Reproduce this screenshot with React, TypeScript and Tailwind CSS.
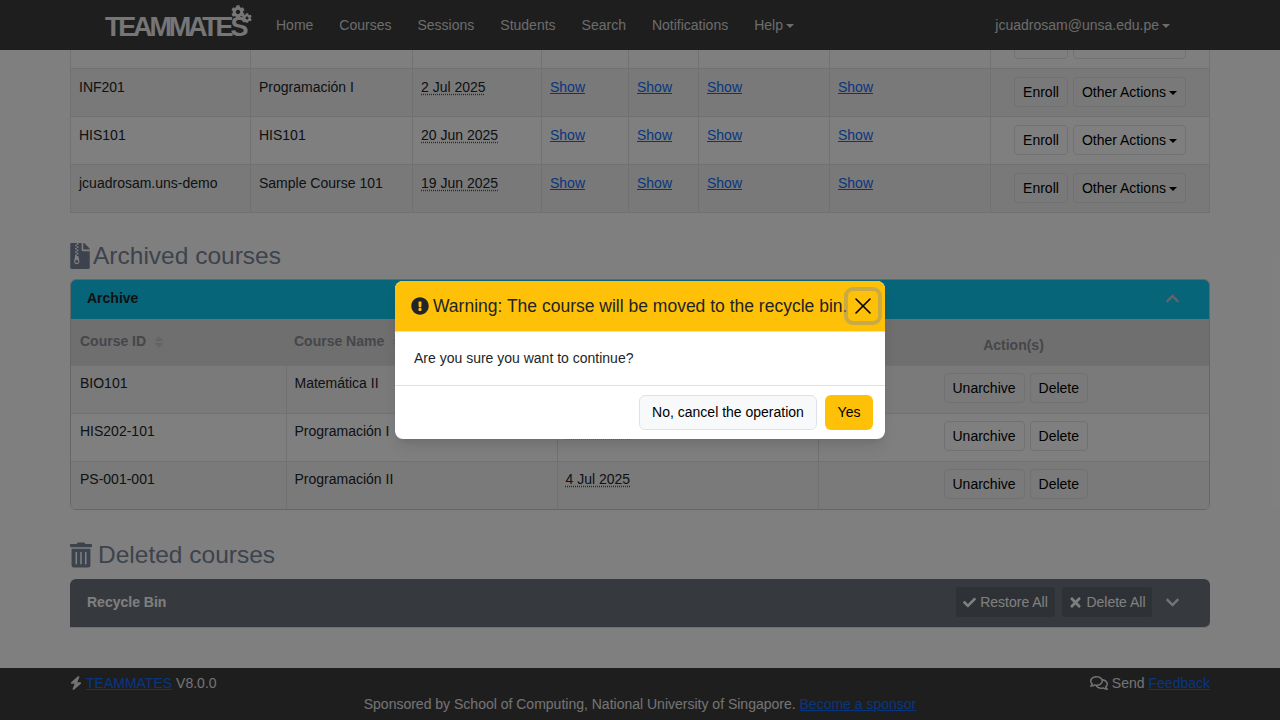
import { ReactNode } from "react";
import {
  FaCheck,
  FaChevronDown,
  FaChevronUp,
  FaCog,
  FaExclamationCircle,
  FaFileArchive,
  FaRegComments,
  FaSort,
  FaTimes,
  FaTrashAlt,
} from "react-icons/fa";
import { FaBolt } from "react-icons/fa6";
import { X } from "lucide-react";

const activeCourses = [
  { id: "", name: "", date: "", striped: false, hidden: true },
  { id: "INF201", name: "Programación I", date: "2 Jul 2025", striped: true },
  { id: "HIS101", name: "HIS101", date: "20 Jun 2025", striped: false },
  {
    id: "jcuadrosam.uns-demo",
    name: "Sample Course 101",
    date: "19 Jun 2025",
    striped: true,
  },
];

const archivedCourses = [
  { id: "BIO101", name: "Matemática II", date: "4 Jul 2025", striped: true },
  { id: "HIS202-101", name: "Programación I", date: "4 Jul 2025", striped: false },
  { id: "PS-001-001", name: "Programación II", date: "4 Jul 2025", striped: true },
];

const navLinks = ["Home", "Courses", "Sessions", "Students", "Search", "Notifications"];

const Caret = () => (
  <span className="ml-[3px] inline-block h-0 w-0 border-x-[4px] border-t-[4px] border-x-transparent border-t-current align-[2px]"></span>
);

const Btn = ({ children }: { children: ReactNode }) => (
  <button className="h-[30px] rounded-[4px] border border-[#dee2e6] px-2 text-sm whitespace-nowrap text-[#000]">
    {children}
  </button>
);

const DateText = ({ children }: { children: ReactNode }) => (
  <span className="underline decoration-[#555] decoration-dotted underline-offset-2">{children}</span>
);

const ShowLink = () => <a className="text-[#0d6efd] underline">Show</a>;

const Navbar = () => (
  <nav className="flex h-[50px] shrink-0 items-center bg-[#3c3c3c] pr-[110px] pl-[105px] text-sm text-[#d8d8d8]">
    <div className="relative top-[2px] mr-[29px] w-[142px] text-[27px] leading-none font-bold tracking-[-3.2px] text-[#ededed]">
      TEAMMATES
      <FaCog className="absolute top-[-9px] left-[126px] text-[14px]" />
      <FaCog className="absolute top-[-1px] left-[137px] text-[10px]" />
    </div>
    <div className="flex gap-[26px]">
      {navLinks.map((link) => (
        <a key={link}>{link}</a>
      ))}
      <a>
        Help
        <Caret />
      </a>
    </div>
    <a className="ml-auto">
      jcuadrosam@unsa.edu.pe
      <Caret />
    </a>
  </nav>
);

const ActiveTable = () => (
  <table className="-mt-[30px] w-full table-fixed border-collapse text-sm text-[#212529]">
    <colgroup>
      <col className="w-[180px]" />
      <col className="w-[162px]" />
      <col className="w-[129px]" />
      <col className="w-[87px]" />
      <col className="w-[70px]" />
      <col className="w-[131px]" />
      <col className="w-[161px]" />
      <col />
    </colgroup>
    <tbody>
      {activeCourses.map((course, index) => (
        <tr key={index} className={course.striped ? "h-[48px] bg-[#f2f2f2]" : "h-[48px]"}>
          <td className="border border-[#dee2e6] px-2 pt-2 align-top">{course.id}</td>
          <td className="border border-[#dee2e6] px-2 pt-2 align-top">{course.name}</td>
          <td className="border border-[#dee2e6] px-2 pt-2 align-top">
            {course.date && <DateText>{course.date}</DateText>}
          </td>
          {[0, 1, 2, 3].map((col) => (
            <td key={col} className="border border-[#dee2e6] px-2 pt-2 align-top">
              {!course.hidden && <ShowLink />}
            </td>
          ))}
          <td className="border border-[#dee2e6] align-top">
            <div className="flex justify-center gap-[5px] pt-2">
              <Btn>Enroll</Btn>
              <Btn>
                Other Actions
                <Caret />
              </Btn>
            </div>
          </td>
        </tr>
      ))}
    </tbody>
  </table>
);

const ArchivePanel = () => (
  <div className="overflow-hidden rounded-[6px] border border-[#ccc]">
    <div className="flex h-[39px] items-center justify-between bg-[#0dcaf0] pr-[29px] pb-[3px] pl-4 text-sm font-bold text-[#212529]">
      Archive
      <FaChevronUp className="text-[15px] text-[#c8c8c8]" />
    </div>
    <table className="w-full table-fixed border-collapse text-sm text-[#212529]">
      <colgroup>
        <col className="w-[215px]" />
        <col className="w-[271px]" />
        <col className="w-[261px]" />
        <col />
      </colgroup>
      <thead>
        <tr className="h-[46px] bg-[#dedede] text-left font-bold text-[#8c8c94]">
          <th className="px-[9px] pb-[2px]">
            Course ID
            <FaSort className="ml-[6px] inline-block text-[#c8c8c8]" />
          </th>
          <th className="px-2 pb-[2px]">
            Course Name
            <FaSort className="ml-[6px] inline-block text-[#c8c8c8]" />
          </th>
          <th className="px-2 pb-[2px]">
            Creation Date
            <FaSort className="ml-[6px] inline-block text-[#c8c8c8]" />
          </th>
          <th className="px-2 pt-[6px] text-center">Action(s)</th>
        </tr>
      </thead>
      <tbody>
        {archivedCourses.map((course) => (
          <tr
            key={course.id}
            className={course.striped ? "h-[48px] bg-[#f4f4f4]" : "h-[48px]"}
          >
            <td className="border-t border-r border-[#dee2e6] px-[9px] pt-[7px] align-top">{course.id}</td>
            <td className="border-t border-r border-[#dee2e6] px-2 pt-[7px] align-top">{course.name}</td>
            <td className="border-t border-r border-[#dee2e6] px-2 pt-[7px] align-top">
              <DateText>{course.date}</DateText>
            </td>
            <td className="border-t border-[#dee2e6] align-top">
              <div className="flex justify-center gap-[5px] pt-[7px] pl-[4px]">
                <Btn>Unarchive</Btn>
                <Btn>Delete</Btn>
              </div>
            </td>
          </tr>
        ))}
      </tbody>
    </table>
  </div>
);

const RecyclePanel = () => (
  <div className="flex h-[49px] items-center rounded-t-[6px] rounded-br-[6px] border-b border-[#dee2e6] bg-[#6c757d] pr-[32px] pb-[2px] pl-[17px] text-sm text-white">
    <span className="font-bold">Recycle Bin</span>
    <div className="ml-auto flex items-center gap-[7px]">
      <button className="flex h-[30px] w-[99px] items-center justify-center gap-1 rounded-[3px] bg-[#5c636a]">
        <FaCheck className="text-[13px]" />
        Restore All
      </button>
      <button className="flex h-[30px] w-[90px] items-center justify-center gap-[3px] rounded-[3px] bg-[#5c636a]">
        <FaTimes className="text-[15px]" />
        Delete All
      </button>
      <FaChevronDown className="mr-[-2px] ml-[6px] text-[15px] text-[#e8e8e8]" />
    </div>
  </div>
);

const Footer = () => (
  <footer className="h-[52px] shrink-0 bg-[#3c3c3c] px-[70px] pt-[4px] text-sm text-[#e6e6e6]">
    <div className="flex h-[21px] items-center justify-between">
      <div className="flex items-center">
        <FaBolt className="mr-[4px] h-[14px] w-[12px]" />
        <a className="text-[#0d6efd] underline">TEAMMATES</a>
        <span className="ml-1">V8.0.0</span>
      </div>
      <div className="flex items-center">
        <FaRegComments className="mr-1 text-[18px]" />
        Send
        <a className="ml-1 text-[#0d6efd] underline">Feedback</a>
      </div>
    </div>
    <p className="mt-[1px] text-center leading-[21px]">
      Sponsored by School of Computing, National University of Singapore.{" "}
      <a className="text-[#0d6efd] underline">Become a sponsor</a>
    </p>
  </footer>
);

const WarningModal = () => (
  <div className="absolute top-[281px] left-[395px] w-[490px] overflow-hidden rounded-[8px] bg-white text-sm text-[#212529] shadow-lg">
    <div className="flex h-[51px] items-center border-b border-[#f0e3b8] bg-[#ffc107] pl-4">
      <FaExclamationCircle className="mr-[4px] text-[18px]" />
      <span className="text-[17.5px] whitespace-nowrap">
        Warning: The course will be moved to the recycle bin.
      </span>
      <button className="ml-[1px] flex h-[30px] w-[30px] shrink-0 items-center justify-center rounded-[5px] text-black ring-4 ring-[#939583]/50">
        <X size={28} strokeWidth={1.4} />
      </button>
    </div>
    <div className="h-[54px] border-b border-[#dee2e6] pt-4 pl-[19px]">
      Are you sure you want to continue?
    </div>
    <div className="flex h-[53px] items-start justify-end gap-2 pt-[9px] pr-3">
      <button className="h-[35px] w-[178px] rounded-[6px] border border-[#dee2e6] bg-[#f8f9fa] pb-[1px] text-black">
        No, cancel the operation
      </button>
      <button className="h-[35px] w-[48px] rounded-[6px] bg-[#ffc107] pb-[1px] text-black">Yes</button>
    </div>
  </div>
);

const App = () => (
  <div className="relative flex h-[720px] flex-col overflow-hidden bg-white font-['Liberation_Sans',Arial,sans-serif]">
    <Navbar />
    <main className="min-h-0 flex-1 overflow-hidden px-[70px]">
      <ActiveTable />
      <h2 className="mt-[27px] mb-[7px] flex h-[32px] items-center text-[24.5px] text-[#7a8699]">
        <FaFileArchive className="mr-[3px] h-[26px] w-[20px] text-[#7a8699]" />
        Archived courses
      </h2>
      <ArchivePanel />
      <h2 className="mt-[29px] mb-[8px] flex h-[32px] items-center text-[24.5px] text-[#7a8699]">
        <FaTrashAlt className="mr-[6px] h-[26px] w-[22px] text-[#7a8699]" />
        Deleted courses
      </h2>
      <RecyclePanel />
    </main>
    <Footer />
    <div className="absolute inset-0 bg-black/50"></div>
    <WarningModal />
  </div>
);

export default App;
